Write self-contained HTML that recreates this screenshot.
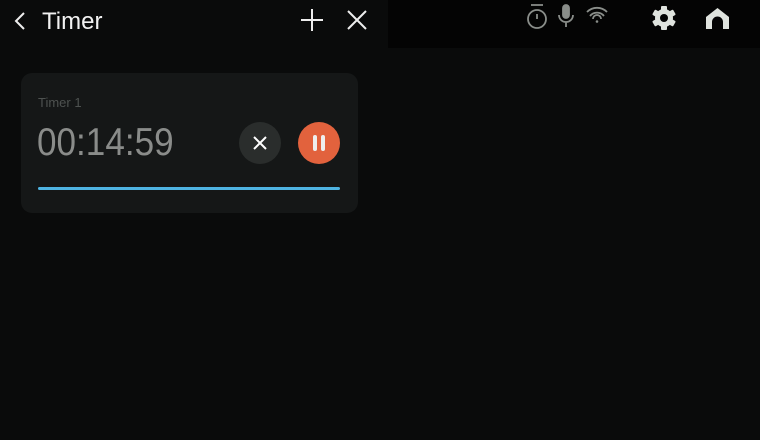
<!DOCTYPE html>
<html><head><style>
body{margin:0;width:760px;height:440px;background:#0a0b0b;overflow:hidden;position:relative;font-family:"Liberation Sans",sans-serif}
.top{position:absolute;left:388px;top:0;width:372px;height:48px;background:#040404}
.card{position:absolute;left:21px;top:73px;width:337px;height:140px;background:#151717;border-radius:11px}
.abs{position:absolute}
</style></head><body>
<div class="top"></div>
<svg class="abs" style="left:0;top:0" width="760" height="60">
<path d="M24 13 L16 21 L24 29" stroke="#eee" stroke-width="2" fill="none"/>
<path d="M312 9V31 M301 20H323" stroke="#eee" stroke-width="2"/>
<path d="M348 11L366 29M366 11L348 29" stroke="#eee" stroke-width="2"/>
<g stroke="#8a8e8a" stroke-width="1.8" fill="none">
<circle cx="537" cy="19" r="9"/><path d="M531 5H543M537 14V19"/>
<rect x="563" y="5" width="6" height="13" rx="3" fill="#8a8e8a"/><path d="M559 15a7 7 0 0 0 14 0M566 22V27"/>
<path d="M587 12a14 14 0 0 1 20 0M590 16a9 9 0 0 1 14 0M593 19a4 4 0 0 1 8 0"/>
</g>
<circle cx="597" cy="21.5" r="1.3" fill="#8a8e8a"/>
<g fill="#dfe3de">
<g transform="translate(664 18)">
<circle r="9"/>
<rect x="-3" y="-12" width="6" height="24" rx="1"/>
<rect x="-3" y="-12" width="6" height="24" rx="1" transform="rotate(60)"/>
<rect x="-3" y="-12" width="6" height="24" rx="1" transform="rotate(120)"/>
</g>
<path d="M706 17L717.5 8L729 17V29H723V22a5.5 5.5 0 0 0-11 0V29H706Z"/>
</g>
<circle cx="664" cy="18" r="4" fill="#040404"/>
</svg>
<div class="abs" style="left:42px;top:8px;color:#f2f2f2;font-size:24px">Timer</div>
<div class="card"></div>
<div class="abs" style="left:38px;top:95px;color:#4e5250;font-size:13px">Timer 1</div>
<div class="abs" style="left:37px;top:121px;color:#8a8c8a;font-size:39px;transform:scaleX(0.9);transform-origin:0 0">00:14:59</div>
<svg class="abs" style="left:0;top:0" width="380" height="220">
<circle cx="260" cy="143" r="21" fill="#2a2d2c"/>
<path d="M254 137L266 149M266 137L254 149" stroke="#fff" stroke-width="2"/>
<circle cx="319" cy="143" r="21" fill="#e2623d"/>
<rect x="313" y="135" width="4" height="16" rx="2" fill="#eee"/>
<rect x="321" y="135" width="4" height="16" rx="2" fill="#eee"/>
<rect x="38" y="187" width="302" height="3" rx="1.5" fill="#4fb4e2"/>
</svg>
</body></html>
